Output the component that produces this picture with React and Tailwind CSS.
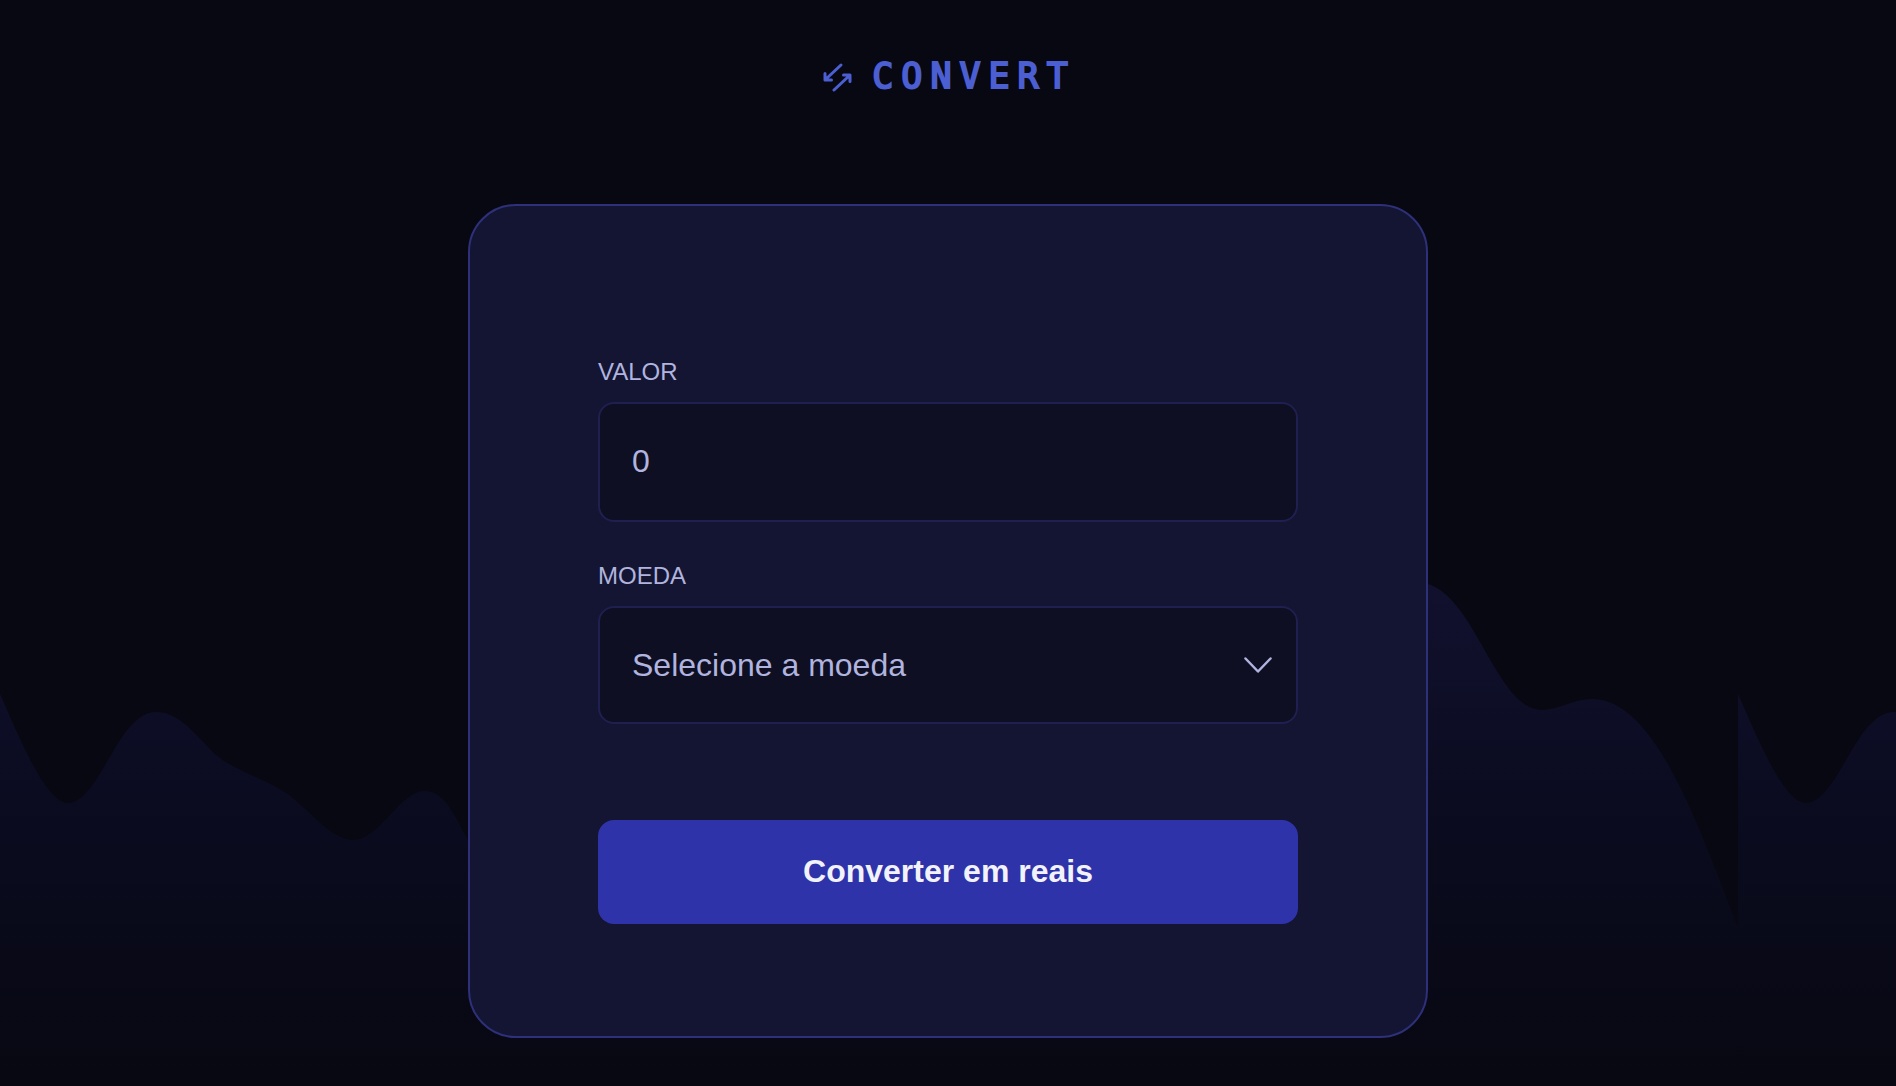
const WAVE =
  "M0 116 C25 174 48 225 68 225 C100 225 118 134 156 134 C185 134 203 170 224 183 C243 195 262 200 286 215 C307 229 330 262 353 262 C380 262 400 213 425 213 C447 213 458 246 470 266 C530 370 640 360 760 300 C920 220 1090 100 1230 50 C1300 20 1390 -9 1428 6 C1476 21 1497 132 1542 132 C1559 132 1573 121 1592 121 C1656 121 1700 252 1738 349 V508 H0 Z";

function Waves() {
  return (
    <svg className="absolute bottom-0 left-0 h-[508px] w-full" aria-hidden="true">
      <defs>
        <linearGradient id="wave-fill" gradientUnits="userSpaceOnUse" x1="0" y1="0" x2="0" y2="508">
          <stop offset="0" stopColor="#11112f" />
          <stop offset="0.5" stopColor="#0a0b1e" />
          <stop offset="1" stopColor="#080812" />
        </linearGradient>
        <pattern id="wave-tile" width="1738" height="508" patternUnits="userSpaceOnUse">
          <path d={WAVE} fill="url(#wave-fill)" />
        </pattern>
      </defs>
      <rect width="100%" height="508" fill="url(#wave-tile)" />
    </svg>
  );
}

function Logo() {
  return (
    <div className="flex items-center justify-center gap-5 text-[#4c5fd2]">
      <svg width="32" height="32" viewBox="0 0 32 32" fill="none" stroke="currentColor" strokeWidth="3" strokeLinecap="round" strokeLinejoin="round" aria-hidden="true">
        <path d="M21 5 L6 19 M5 13.500 V20 H11.500" />
        <path d="M5 15 V20 H10 Z" fill="currentColor" stroke="none" />
        <path d="M14 30 L29 16 M23.500 15 H30 V21.500" />
        <path d="M25 15 H30 V20 Z" fill="currentColor" stroke="none" />
      </svg>
      <h1 className="font-['DejaVu_Sans_Mono',monospace] text-[35px] leading-14 font-normal tracking-[8px] [-webkit-text-stroke:2px_#4c5fd2]">
        CONVERT
      </h1>
    </div>
  );
}

const fieldClass =
  "w-full appearance-none rounded-2xl border-2 border-[#1f1f50] bg-[#0e0f22] px-8 text-[32px] text-[#b0b4de] outline-none placeholder:text-[#b0b4de] focus:border-[#4c5fd2]";
const labelClass = "mb-3 block text-2xl leading-9 uppercase text-[#b0b4de]";

export default function App() {
  return (
    <div className="relative min-h-screen overflow-hidden bg-[#080812] pt-12 pb-12 font-['Liberation_Sans',Arial,sans-serif]">
      <Waves />
      <header className="relative mb-25">
        <Logo />
      </header>
      <main className="relative mx-auto w-full max-w-[960px] rounded-[48px] border-2 border-[#2e307a] bg-[#141433] px-32 pt-37 pb-28">
        <form onSubmit={(event) => event.preventDefault()}>
          <label htmlFor="amount" className={labelClass}>
            Valor
          </label>
          <input id="amount" type="text" inputMode="decimal" placeholder="0" className={`${fieldClass} block h-30 pb-0.5`} />

          <label htmlFor="currency" className={`${labelClass} mt-9`}>
            Moeda
          </label>
          <div className="relative">
            <select id="currency" defaultValue="" className={`${fieldClass} block h-[118px]`}>
              <option value="" disabled hidden>
                Selecione a moeda
              </option>
              <option value="USD">Dólar Americano</option>
              <option value="EUR">Euro</option>
              <option value="GBP">Libra Esterlina</option>
            </select>
            <svg className="pointer-events-none absolute inset-y-0 right-6 my-auto" width="32" height="32" viewBox="0 0 32 32" fill="none" stroke="#b0b4de" strokeWidth="2.500" strokeLinecap="round" strokeLinejoin="round" aria-hidden="true">
              <path d="M3.500 9.500 L16 22.500 L28.500 9.500" />
            </svg>
          </div>

          <button type="submit" className="mt-24 block h-26 w-full rounded-2xl bg-[#2f33a9] pb-0.5 text-[32px] font-bold text-[#f2f2fa]">
            Converter em reais
          </button>
        </form>
      </main>
    </div>
  );
}
